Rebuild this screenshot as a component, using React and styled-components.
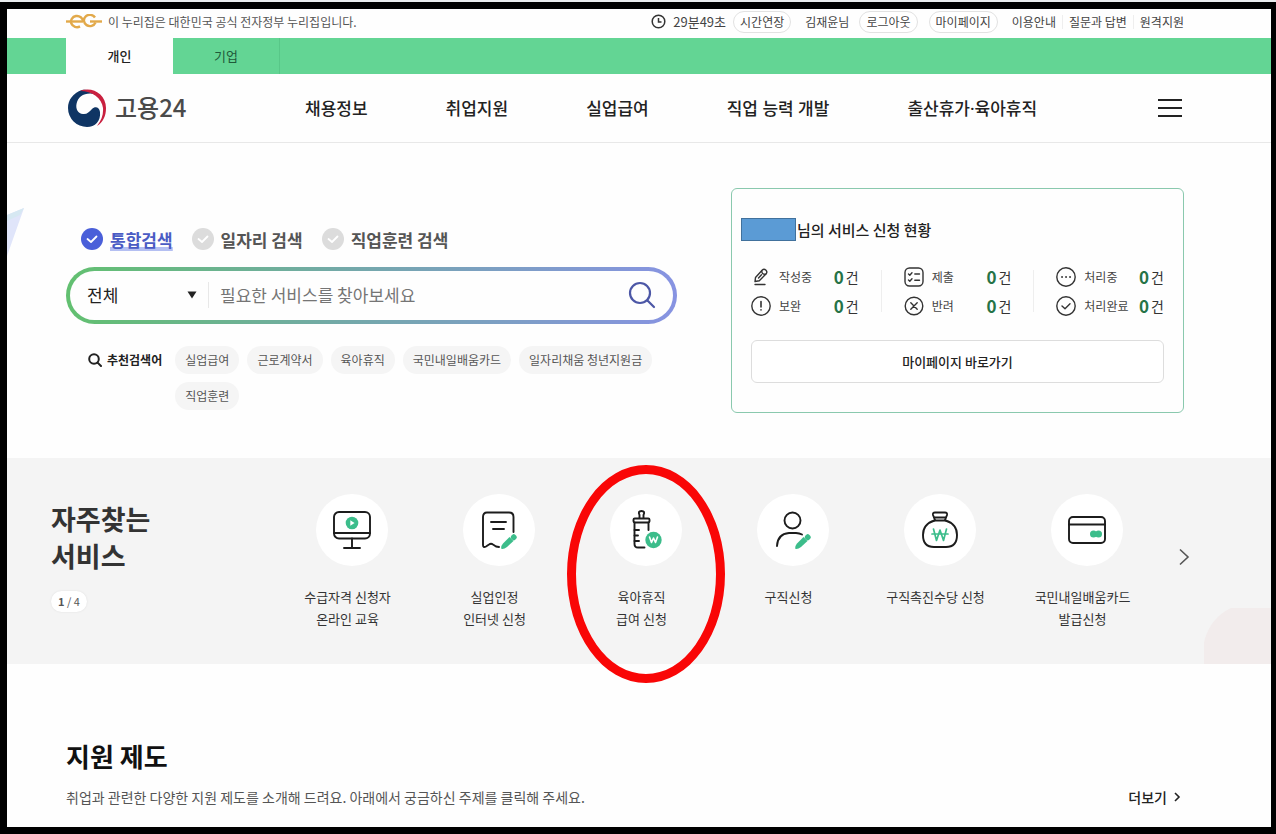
import { useState } from "react";
import { styled, createGlobalStyle } from "styled-components";

const keywords = [
  "실업급여",
  "근로계약서",
  "육아휴직",
  "국민내일배움카드",
  "일자리채움 청년지원금",
  "직업훈련",
];

const menus = [
  "채용정보",
  "취업지원",
  "실업급여",
  "직업 능력 개발",
  "출산휴가·육아휴직",
];

const searchKinds = ["통합검색", "일자리 검색", "직업훈련 검색"];

const statusColumns = [
  [
    { label: "작성중", icon: "pencil" },
    { label: "보완", icon: "alert" },
  ],
  [
    { label: "제출", icon: "list" },
    { label: "반려", icon: "cross" },
  ],
  [
    { label: "처리중", icon: "dots" },
    { label: "처리완료", icon: "check" },
  ],
];

const services = [
  { id: 1, lines: ["수급자격 신청자", "온라인 교육"], icon: "monitor" },
  { id: 2, lines: ["실업인정", "인터넷 신청"], icon: "paper" },
  { id: 3, lines: ["육아휴직", "급여 신청"], icon: "bottle", marked: true },
  { id: 4, lines: ["구직신청"], icon: "person" },
  { id: 5, lines: ["구직촉진수당 신청"], icon: "bag" },
  { id: 6, lines: ["국민내일배움카드", "발급신청"], icon: "card" },
];

export default function App() {
  return (
    <Page>
      <GlobalStyle />
      <Frame>
        <TopBar />
        <MemberTabs>
          <MemberTab href="#personal" $active>
            개인
          </MemberTab>
          <MemberTab href="#company">기업</MemberTab>
        </MemberTabs>
        <MainHeader />
        <Hero>
          <HeroShape viewBox="0 0 17 48" aria-hidden="true">
            <path d="M0 7 L17 0 L0 48 Z" fill="#e0e5fa" />
            <path d="M0 7 L17 0 L13 7 L0 13 Z" fill="#d6e8f2" />
          </HeroShape>
          <SearchArea />
          <StatusCard />
        </Hero>
        <Services />
        <Support>
          <SupportTitle>지원 제도</SupportTitle>
          <SupportRow>
            <SupportText>
              취업과 관련한 다양한 지원 제도를 소개해 드려요. 아래에서 궁금하신
              주제를 클릭해 주세요.
            </SupportText>
            <MoreLink href="#more">
              더보기
              <svg width="8" height="10" viewBox="0 0 8 10" aria-hidden="true">
                <path d="M2 1 L6 5 L2 9" fill="none" stroke="#222" strokeWidth="1.6" />
              </svg>
            </MoreLink>
          </SupportRow>
        </Support>
      </Frame>
    </Page>
  );
}

function TopBar() {
  return (
    <TopBarBox>
      <Notice>
        <svg width="36" height="15" viewBox="0 0 36 15" aria-hidden="true">
          <g fill="none" stroke="#e2a94a" strokeWidth="2.4">
            <path d="M0 7.5 H17" />
            <path d="M17 7.5 A6 5.600 0 1 0 14 12.4" />
            <path d="M29 3.5 A6 5.600 0 1 0 29.5 8.5" />
            <path d="M24 7.5 H36" />
          </g>
        </svg>
        이 누리집은 대한민국 공식 전자정부 누리집입니다.
      </Notice>
      <Utils>
        <svg width="15" height="15" viewBox="0 0 15 15" aria-hidden="true">
          <circle cx="7.5" cy="7.5" r="6.3" fill="none" stroke="#333" strokeWidth="1.5" />
          <path d="M7.5 4 V8 H10.5" fill="none" stroke="#333" strokeWidth="1.5" />
        </svg>
        <Timer>29분49초</Timer>
        <PillButton type="button">시간연장</PillButton>
        <UserName>김재윤님</UserName>
        <PillButton type="button">로그아웃</PillButton>
        <PillButton type="button" $spaced>
          마이페이지
        </PillButton>
        <UtilLinks>
          <UtilLink href="#guide">이용안내</UtilLink>
          <UtilLink href="#qna">질문과 답변</UtilLink>
          <UtilLink href="#remote">원격지원</UtilLink>
        </UtilLinks>
      </Utils>
    </TopBarBox>
  );
}

function MainHeader() {
  return (
    <HeaderBox>
      <Logo href="#home">
        <svg width="40" height="38" viewBox="0 0 38 38" aria-hidden="true">
          <path
            d="M14 1 C5 4 0 11 0 19 A19 19 0 0 0 19 38 C27 38 33 32 32 23 C31.500 18 27 17 24 20 C21 23 19 25.500 15 25 C10 24.500 7.500 20 8.500 15 C10 7 17 3 27 5 C23 1.500 18 0 14 1 Z"
            fill="#0f3564"
          />
          <path
            d="M12 2 C24 -3 38 5 38 19 C38 27 35 33 29 37 C33.500 31 35.500 26 35 19 C34 9 24 2 12 2 Z"
            fill="#c9203f"
          />
        </svg>
        <LogoName>고용24</LogoName>
      </Logo>
      <Nav>
        {menus.map((menu) => (
          <NavLink key={menu} href="#menu">
            {menu}
          </NavLink>
        ))}
      </Nav>
      <MenuButton type="button" aria-label="전체메뉴">
        <svg width="24" height="18" viewBox="0 0 24 18" aria-hidden="true">
          <path d="M0 1 H24 M0 9 H24 M0 17 H24" stroke="#222" strokeWidth="2" />
        </svg>
      </MenuButton>
    </HeaderBox>
  );
}

function SearchArea() {
  const [kind, setKind] = useState(searchKinds[0]);
  return (
    <SearchColumn>
      <KindRow>
        {searchKinds.map((name) => (
          <KindLabel key={name}>
            <KindRadio
              type="radio"
              name="kind"
              checked={kind === name}
              onChange={() => setKind(name)}
            />
            <KindMark viewBox="0 0 22 22" aria-hidden="true">
              <path
                d="M6.500 11 L10 14 L15.500 8.500"
                fill="none"
                stroke="#fff"
                strokeWidth="1.8"
                strokeLinecap="round"
                strokeLinejoin="round"
              />
            </KindMark>
            <KindName $active={kind === name}>{name}</KindName>
          </KindLabel>
        ))}
      </KindRow>
      <SearchBox>
        <SearchSelect aria-label="검색 범위" defaultValue="전체">
          <option>전체</option>
        </SearchSelect>
        <SelectArrow width="10" height="8" viewBox="0 0 10 8" aria-hidden="true">
          <path d="M0.500 0.500 H9.500 L5 7.500 Z" fill="#222" />
        </SelectArrow>
        <SearchInput
          type="text"
          aria-label="검색어"
          placeholder="필요한 서비스를 찾아보세요"
        />
        <SearchButton type="button" aria-label="검색">
          <svg width="28" height="28" viewBox="0 0 28 28" aria-hidden="true">
            <g fill="none" stroke="#4c57a6" strokeWidth="2.2" strokeLinecap="round">
              <circle cx="12" cy="12" r="10" />
              <path d="M19.500 19.500 L26 26" />
            </g>
          </svg>
        </SearchButton>
      </SearchBox>
      <KeywordRow>
        <KeywordTitle>
          <svg width="14" height="14" viewBox="0 0 14 14" aria-hidden="true">
            <g fill="none" stroke="#222" strokeWidth="2" strokeLinecap="round">
              <circle cx="6" cy="6" r="4.800" />
              <path d="M9.600 9.600 L13 13" />
            </g>
          </svg>
          추천검색어
        </KeywordTitle>
        <Keywords>
          {keywords.map((word) => (
            <Keyword key={word} href="#keyword">
              {word}
            </Keyword>
          ))}
        </Keywords>
      </KeywordRow>
    </SearchColumn>
  );
}

function StatusCard() {
  return (
    <Card>
      <CardTitle>
        <NameMask />
        님의 서비스 신청 현황
      </CardTitle>
      <StatusGrid>
        {statusColumns.map((column) => (
          <StatusColumn key={column[0].label}>
            {column.map((item) => (
              <StatusItem key={item.label}>
                <StatusIcon name={item.icon} />
                <StatusLabel>{item.label}</StatusLabel>
                <StatusCount>
                  <strong>0</strong>건
                </StatusCount>
              </StatusItem>
            ))}
          </StatusColumn>
        ))}
      </StatusGrid>
      <MyPageButton type="button">마이페이지 바로가기</MyPageButton>
    </Card>
  );
}

function StatusIcon({ name }) {
  return (
    <svg width="20" height="20" viewBox="0 0 20 20" aria-hidden="true">
      <g
        fill="none"
        stroke="#333"
        strokeWidth="1.4"
        strokeLinecap="round"
        strokeLinejoin="round"
      >
        {name === "pencil" && (
          <>
            <path d="M4 14.500 L4.500 10.500 L11.300 3 Q13 1.500 15 3.200 Q16.600 5 15.200 6.800 L8.300 13.700 Z" />
            <path d="M10.800 3.800 Q10.500 7.500 14.600 7.200" />
            <path d="M7.500 11 L10.500 7.800" />
            <path d="M4 17.500 H14" />
          </>
        )}
        {name === "alert" && (
          <>
            <circle cx="10" cy="10" r="9.200" />
            <path d="M10 5.500 V11 M10 13.800 V14" strokeWidth="1.600" />
          </>
        )}
        {name === "list" && (
          <>
            <rect x="1" y="1" width="18" height="18" rx="4.500" />
            <path d="M4.500 7 L5.800 8.200 L8 5.800 M4.500 13 L5.800 14.200 L8 11.800" />
            <path d="M10.800 7 H15.500 M10.800 13.200 H15.500" />
          </>
        )}
        {name === "cross" && (
          <>
            <circle cx="10" cy="10" r="8.800" />
            <path d="M6.800 6.800 L13.200 13.200 M13.200 6.800 L6.800 13.200" />
          </>
        )}
        {name === "dots" && (
          <>
            <circle cx="10" cy="10" r="9.200" />
            <path d="M6 10 H6.100 M10 10 H10.100 M14 10 H14.100" strokeWidth="1.800" />
          </>
        )}
        {name === "check" && (
          <>
            <circle cx="10" cy="10" r="9.200" />
            <path d="M6 10 L9 12.800 L14 7.800" />
          </>
        )}
      </g>
    </svg>
  );
}

function Services() {
  return (
    <ServicesBand>
      <ServicesHead>
        <ServicesTitle>
          자주찾는
          <br />
          서비스
        </ServicesTitle>
        <Pager>
          <strong>1</strong> / 4
        </Pager>
      </ServicesHead>
      <ServiceList>
        {services.map((service) => (
          <ServiceItem key={service.id} href="#service">
            <ServiceCircle>
              <ServiceIcon name={service.icon} />
              {service.marked && <RedRing />}
            </ServiceCircle>
            <span>
              {service.lines.map((line) => (
                <ServiceLine key={line}>{line}</ServiceLine>
              ))}
            </span>
          </ServiceItem>
        ))}
      </ServiceList>
      <NextButton type="button" aria-label="다음">
        <svg width="12" height="18" viewBox="0 0 12 18" aria-hidden="true">
          <path d="M2 1.500 L10 9 L2 16.500" fill="none" stroke="#555" strokeWidth="1.600" />
        </svg>
      </NextButton>
      <BandShape viewBox="0 0 67 56" aria-hidden="true">
        <path d="M0 56 V34 Q6 10 27 0 H67 V56 Z" fill="#f2ecec" />
      </BandShape>
    </ServicesBand>
  );
}

const MINT = "#3cbd8b";

function SmallPencil() {
  return (
    <g fill={MINT} stroke="none">
      <path d="M22.500 39 Q21.500 36.500 24 33.500 L30.500 27 L34.500 31 L28 37 Q25 39.500 22.500 39 Z" />
      <rect x="32" y="24.500" width="5.500" height="5.500" rx="2" transform="rotate(45 34.750 27.250)" />
    </g>
  );
}

function ServiceIcon({ name }) {
  return (
    <svg width="40" height="40" viewBox="0 0 40 40" aria-hidden="true">
      <g
        fill="none"
        stroke="#1c1c1c"
        strokeWidth="1.900"
        strokeLinecap="round"
        strokeLinejoin="round"
      >
        {name === "monitor" && (
          <>
            <rect x="2" y="2" width="36" height="26.500" rx="5" />
            <path d="M2 23 H38 M20 28.500 V38 M12 38 H28" />
            <circle cx="20" cy="13" r="6.300" fill={MINT} stroke="none" />
            <path d="M18.300 10.300 L22.600 13 L18.300 15.700 Z" fill="#fff" stroke="none" />
          </>
        )}
        {name === "paper" && (
          <>
            <path d="M34.500 22 V7 Q34.500 2.500 30 2.500 H8 Q4 2.500 4 7 V35 Q4 38 7 36.500 L10 34.500 Q12 33 14 34.500 L17 36.500 L20 37" />
            <path d="M12 12 H27 M14 19 H25" />
            <SmallPencil />
          </>
        )}
        {name === "bottle" && (
          <>
            <path d="M13.500 8 V5 Q11.500 1 15.500 1 Q19.500 1 17.500 5 V8" />
            <rect x="7.500" y="8.500" width="16" height="4" rx="1.200" />
            <path d="M8.500 12.500 V34 Q8.500 37.500 12 37.500 H18.500 M22.500 12.500 V20" />
            <path d="M8.500 20 H13 M8.500 25.500 H12 M8.500 31 H13" />
            <circle cx="27.500" cy="30" r="8.200" fill={MINT} stroke="none" />
            <path
              d="M23.500 27 L25.500 32.500 L27.500 28 L29.500 32.500 L31.500 27"
              stroke="#fff"
              strokeWidth="1.600"
            />
          </>
        )}
        {name === "person" && (
          <>
            <circle cx="19.500" cy="10.500" r="8" />
            <path d="M4 36 Q4.500 24 16 23 H23 Q26.500 23.200 29 24.500" />
            <SmallPencil />
          </>
        )}
        {name === "bag" && (
          <>
            <path d="M15 10 L13 5 Q12.500 2.500 15 2.500 H25 Q27.500 2.500 27 5 L25 10" />
            <path d="M14.500 7.500 H25.500 M14.500 10.500 H25.500" />
            <path d="M14.500 10.500 Q3 14 3 25 Q3 37 14 37 H26 Q37 37 37 25 Q37 14 25.500 10.500" />
            <path
              d="M13.500 19 L16.500 30.500 L20 20 L23.500 30.500 L26.500 19 M12 24 H28"
              stroke={MINT}
              strokeWidth="1.700"
            />
          </>
        )}
        {name === "card" && (
          <>
            <rect x="2" y="7" width="36" height="26" rx="4" />
            <path d="M2 14.500 H38" />
            <circle cx="26.500" cy="24" r="3.500" fill={MINT} stroke="none" />
            <circle cx="31.500" cy="24" r="3.500" fill={MINT} stroke="none" />
          </>
        )}
      </g>
    </svg>
  );
}

const GlobalStyle = createGlobalStyle`
  * {
    box-sizing: border-box;
  }
  body {
    margin: 0;
    background-color: #e9ecee;
    font-family: "Noto Sans CJK KR", sans-serif;
    color: #333;
  }
  button, input, select {
    font-family: inherit;
    color: inherit;
    margin: 0;
  }
  a {
    color: inherit;
    text-decoration: none;
  }
  svg {
    flex-shrink: 0;
  }
`;

const Page = styled.div`
  display: flex;
  flex-direction: column;
  min-height: 100vh;
  padding-top: 2px;
`;
const Frame = styled.div`
  display: flex;
  flex-direction: column;
  flex: 1;
  background-color: #fefefe;
  border: 7px solid #000;
  border-right-width: 5px;
`;

const TopBarBox = styled.div`
  display: flex;
  justify-content: space-between;
  align-items: center;
  height: 29px;
  padding: 0 87px 4px 59px;
  font-size: 12px;
  color: #555;
`;
const Notice = styled.div`
  display: flex;
  align-items: center;
  gap: 6px;
`;
const Utils = styled.div`
  display: flex;
  align-items: center;
`;
const Timer = styled.span`
  margin: 0 7px;
  font-size: 13px;
  color: #444;
`;
const PillButton = styled.button`
  height: 22px;
  margin-left: ${(props) => (props.$spaced ? "11px" : "0")};
  padding: 0 6px;
  border: 1px solid #e2e2e2;
  border-radius: 11px;
  background-color: white;
  font-size: 12px;
  line-height: 18px;
  color: #444;
`;
const UserName = styled.span`
  margin: 0 10px 0 14px;
  color: #444;
`;
const UtilLinks = styled.nav`
  display: flex;
  margin-left: 14px;
  gap: 6px;
`;
const UtilLink = styled.a`
  color: #444;
  line-height: 14px;
  & + & {
    padding-left: 6px;
    border-left: 1px solid #eee;
  }
`;

const MemberTabs = styled.nav`
  display: flex;
  height: 36px;
  padding-left: 59px;
  background-color: #63d594;
`;
const MemberTab = styled.a`
  display: flex;
  align-items: center;
  justify-content: center;
  width: 107px;
  padding-bottom: 1px;
  font-size: 13px;
  font-weight: ${(props) => (props.$active ? "500" : "400")};
  color: ${(props) => (props.$active ? "#222" : "#1f5a3a")};
  background-color: ${(props) => (props.$active ? "#fefefe" : "transparent")};
  border-right: ${(props) => (props.$active ? "none" : "1px solid #58c788")};
`;

const HeaderBox = styled.header`
  display: flex;
  align-items: center;
  height: 69px;
  padding: 0 89px 0 60px;
  border-bottom: 1px solid #e8e8e8;
`;
const Logo = styled.a`
  display: flex;
  align-items: center;
  gap: 8px;
  width: 238px;
`;
const LogoName = styled.span`
  padding-bottom: 3px;
  font-size: 24px;
  font-weight: 500;
  color: #4a4a4a;
`;
const Nav = styled.nav`
  display: flex;
  flex: 1;
  gap: 78px;
`;
const NavLink = styled.a`
  padding-bottom: 2px;
  font-family: "Noto Sans", "Noto Sans CJK KR", sans-serif;
  font-size: 17px;
  font-weight: 500;
  color: #222;
  white-space: nowrap;
`;
const MenuButton = styled.button`
  display: flex;
  padding: 0;
  border: none;
  background: none;
  cursor: pointer;
`;

const Hero = styled.section`
  position: relative;
  display: grid;
  grid-template-columns: 611fr 453fr;
  gap: 54px;
  padding: 45px 87px 45px 59px;
`;
const HeroShape = styled.svg`
  position: absolute;
  left: 0;
  top: 65px;
  width: 17px;
  height: 48px;
`;

const SearchColumn = styled.div`
  padding-top: 38px;
`;
const KindRow = styled.div`
  display: flex;
  gap: 19px;
  padding-left: 15px;
`;
const KindLabel = styled.label`
  display: grid;
  grid-template-columns: 22px auto;
  align-items: center;
  column-gap: 7px;
  height: 26px;
  cursor: pointer;
`;
const KindRadio = styled.input`
  appearance: none;
  grid-area: 1 / 1;
  width: 22px;
  height: 22px;
  border-radius: 50%;
  background-color: #dcdcdc;
  &:checked {
    background-color: #4a5fd9;
  }
`;
const KindMark = styled.svg`
  grid-area: 1 / 1;
  width: 22px;
  height: 22px;
  pointer-events: none;
`;
const KindName = styled.span`
  padding-top: 2px;
  font-size: 17px;
  line-height: 22px;
  font-weight: bold;
  color: ${(props) => (props.$active ? "#4a5bc4" : "#555")};
  background: ${(props) =>
    props.$active
      ? "linear-gradient(#b4bff2, #b4bff2) bottom / 100% 4px no-repeat"
      : "none"};
`;
const SearchBox = styled.div`
  display: flex;
  align-items: center;
  height: 57px;
  margin-top: 15px;
  padding: 0 17px 2px;
  border: 4px solid transparent;
  border-radius: 29px;
  background:
    linear-gradient(#fefefe, #fefefe) padding-box,
    linear-gradient(90deg, #62c070, #73a9a8 45%, #8793e2) border-box;
`;
const SearchSelect = styled.select`
  appearance: none;
  width: 100px;
  padding: 0;
  border: none;
  background: none;
  font-size: 17px;
  color: #222;
`;
const SelectArrow = styled.svg`
  pointer-events: none;
`;
const SearchInput = styled.input`
  flex: 1;
  min-width: 0;
  height: 26px;
  margin-left: 11px;
  padding: 0 0 0 11px;
  border: none;
  border-left: 1px solid #e8e8e8;
  background: none;
  font-size: 17px;
  outline: none;
  &::placeholder {
    color: #757575;
  }
`;
const SearchButton = styled.button`
  display: flex;
  padding: 0;
  border: none;
  background: none;
  cursor: pointer;
`;
const KeywordRow = styled.div`
  display: flex;
  align-items: flex-start;
  gap: 13px;
  margin-top: 22px;
  padding: 0 14px 0 22px;
`;
const KeywordTitle = styled.strong`
  display: flex;
  align-items: center;
  gap: 5px;
  font-size: 12px;
  line-height: 28px;
  color: #222;
  white-space: nowrap;
`;
const Keywords = styled.div`
  display: flex;
  flex-wrap: wrap;
  gap: 8px;
`;
const Keyword = styled.a`
  padding: 0 10px;
  border-radius: 14px;
  background-color: #f5f5f5;
  font-size: 12px;
  line-height: 28px;
  color: #555;
`;

const Card = styled.section`
  display: flex;
  flex-direction: column;
  padding: 29px 19px;
  border: 1px solid #8ac9ae;
  border-radius: 6px;
`;
const CardTitle = styled.h2`
  display: flex;
  align-items: center;
  margin: 0 0 25px -10px;
  font-size: 15px;
  line-height: 23px;
  font-weight: 500;
  color: #222;
`;
const NameMask = styled.span`
  width: 55px;
  height: 23px;
  margin-right: 1px;
  border: 1px solid #41719c;
  background-color: #5b9bd5;
`;
const StatusGrid = styled.div`
  display: grid;
  grid-template-columns: repeat(3, 1fr);
  column-gap: 45px;
`;
const StatusColumn = styled.ul`
  position: relative;
  display: grid;
  gap: 8px;
  margin: 0;
  padding: 0;
  list-style: none;
  & + &::before {
    content: "";
    position: absolute;
    left: -23px;
    top: 4px;
    bottom: 4px;
    width: 1px;
    background-color: #eee;
  }
`;
const StatusItem = styled.li`
  display: flex;
  align-items: center;
  height: 21px;
`;
const StatusLabel = styled.span`
  flex: 1;
  padding-left: 8px;
  font-size: 12px;
  color: #444;
`;
const StatusCount = styled.span`
  display: flex;
  align-items: center;
  gap: 2px;
  font-size: 14px;
  line-height: 20px;
  strong {
    font-size: 17px;
    color: #267347;
  }
`;
const MyPageButton = styled.button`
  height: 43px;
  margin-top: 24px;
  border: 1px solid #ddd;
  border-radius: 6px;
  background-color: white;
  font-size: 13px;
  font-weight: 500;
  color: #222;
`;

const ServicesBand = styled.section`
  position: relative;
  display: flex;
  padding: 36px 81px 34px 44px;
  background-color: #f4f4f4;
`;
const ServicesHead = styled.div`
  width: 223px;
  padding-top: 6px;
`;
const ServicesTitle = styled.h2`
  margin: 0;
  font-size: 27px;
  line-height: 37px;
  font-weight: bold;
  color: #333;
`;
const Pager = styled.span`
  display: inline-block;
  margin-top: 17px;
  padding: 0 7px;
  border-radius: 11px;
  background-color: white;
  font-size: 11px;
  line-height: 21px;
  color: #555;
  box-shadow: 0 0 2px #ddd;
`;
const ServiceList = styled.div`
  display: grid;
  grid-template-columns: repeat(6, 1fr);
  flex: 1;
`;
const ServiceItem = styled.a`
  display: flex;
  flex-direction: column;
  align-items: center;
  gap: 20px;
  font-size: 13px;
  line-height: 22px;
  text-align: center;
  color: #333;
`;
const ServiceCircle = styled.span`
  position: relative;
  display: flex;
  align-items: center;
  justify-content: center;
  width: 72px;
  height: 72px;
  margin-left: 9px;
  border-radius: 50%;
  background-color: white;
`;
const RedRing = styled.span`
  position: absolute;
  top: -29px;
  left: -43px;
  z-index: 1;
  width: 158px;
  height: 218px;
  border: 9px solid #f90606;
  border-radius: 50%;
  pointer-events: none;
`;
const ServiceLine = styled.span`
  display: block;
`;
const NextButton = styled.button`
  display: flex;
  align-self: center;
  margin-left: 22px;
  padding: 0 0 10px;
  border: none;
  background: none;
  cursor: pointer;
`;
const BandShape = styled.svg`
  position: absolute;
  right: 0;
  bottom: 0;
  width: 67px;
  height: 56px;
`;

const Support = styled.section`
  flex: 1;
  padding: 72px 90px 18px 59px;
`;
const SupportTitle = styled.h2`
  margin: 0;
  font-size: 26px;
  line-height: 40px;
  font-weight: bold;
  color: #111;
`;
const SupportRow = styled.div`
  display: flex;
  justify-content: space-between;
  align-items: center;
  margin-top: 10px;
`;
const SupportText = styled.p`
  margin: 0;
  font-size: 14px;
  line-height: 22px;
  color: #555;
`;
const MoreLink = styled.a`
  display: flex;
  align-items: center;
  gap: 6px;
  font-size: 14px;
  line-height: 22px;
  font-weight: 500;
  color: #222;
`;
